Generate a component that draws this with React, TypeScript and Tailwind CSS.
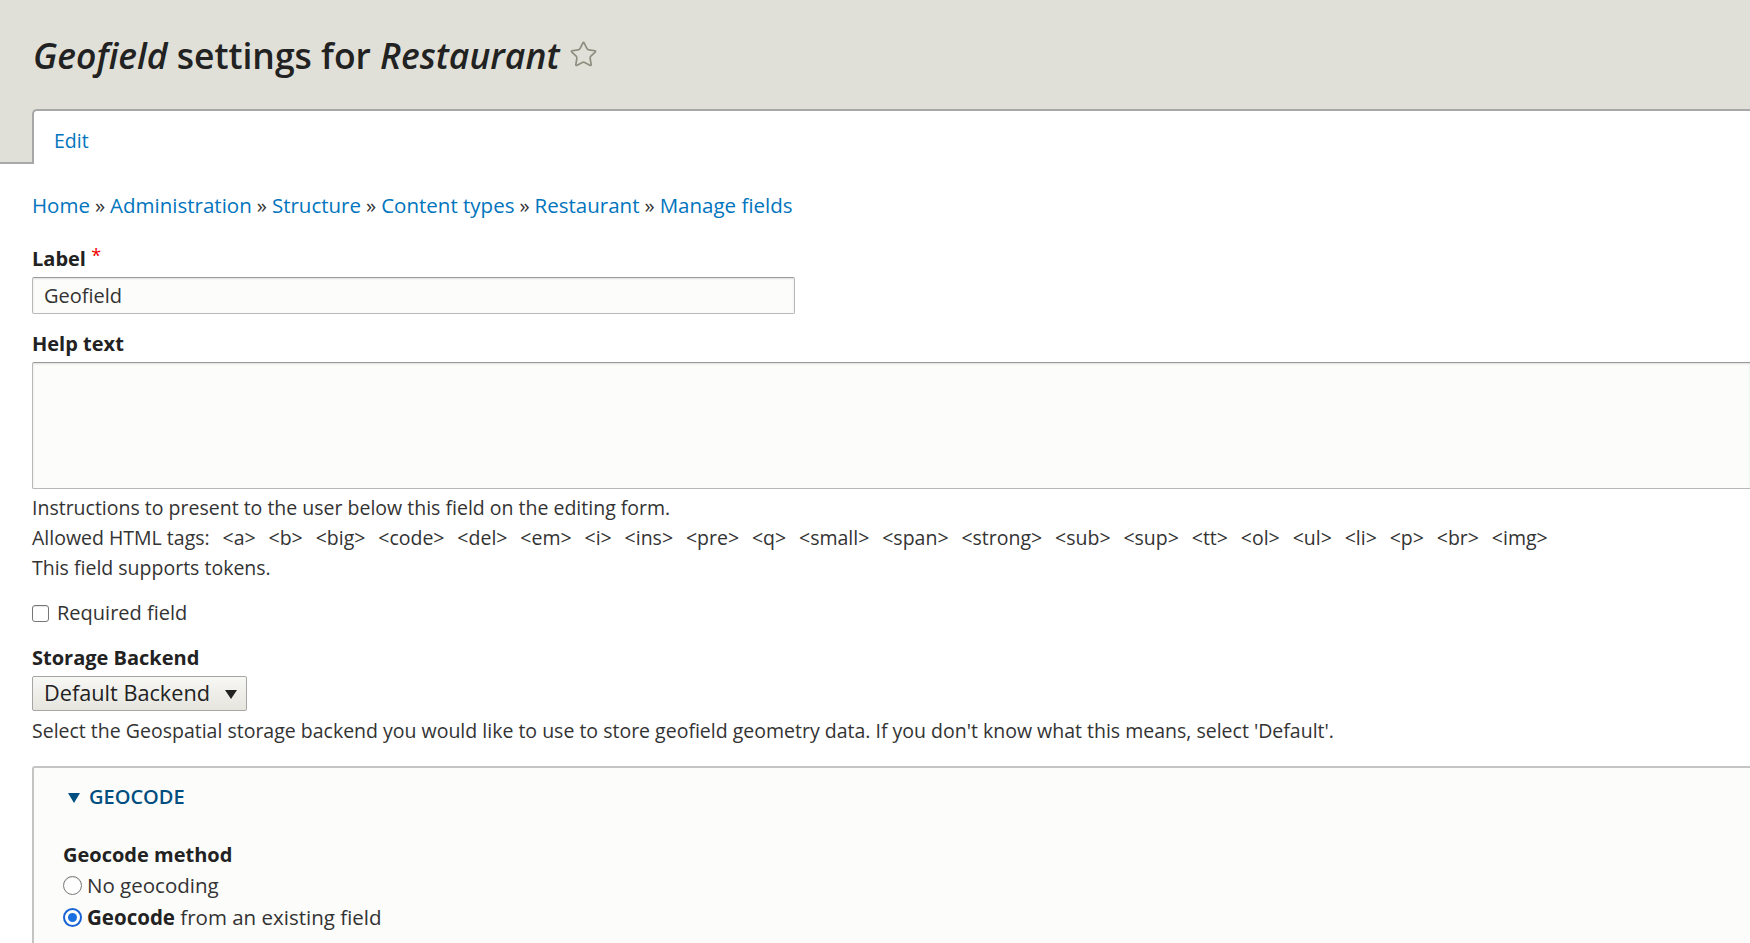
import React from 'react'
import { Star } from 'lucide-react'

const crumbs = ['Home', 'Administration', 'Structure', 'Content types', 'Restaurant', 'Manage fields']

const tags = '<a> <b> <big> <code> <del> <em> <i> <ins> <pre> <q> <small> <span> <strong> <sub> <sup> <tt> <ol> <ul> <li> <p> <br> <img>'

export default function App() {
  return (
    <div className="min-h-screen bg-white text-[#333] overflow-hidden" style={{ fontFamily: '"Open Sans", "Noto Sans", sans-serif' }}>
      {/* Header */}
      <header className="bg-[#e0e0d8]">
        <div className="h-[109px] flex items-center pl-[33px]">
          <h1 className="text-[35.5px] leading-[42px] text-[#222] font-semibold flex items-center">
            <em>Geofield</em>
            <span className="ml-[9px]">settings for</span>
            <em className="ml-[9px]">Restaurant</em>
            <Star className="ml-[9px] w-[29px] h-[29px] text-[#8e8e80]" strokeWidth={1.4} />
          </h1>
        </div>
        <div className="flex h-[55px]">
          <div className="w-[32px] border-b-2 border-[#a8a8a8]"></div>
          <div className="flex-1 bg-white border-t-2 border-l-2 border-[#a8a8a8] rounded-tl-[5px] pl-[20px] pt-[18px]">
            <a href="#" className="text-[19.5px] leading-[24px] text-[#0074bd]">Edit</a>
          </div>
        </div>
      </header>

      <main className="pl-[32px]">
        {/* Breadcrumb */}
        <nav className="mt-[29px] text-[20.5px] leading-[24px] text-[#333]">
          {crumbs.map((c, i) => (
            <span key={c}>
              {i > 0 && <span className="mx-[5px]">»</span>}
              <a href="#" className="text-[#0074bd]">{c}</a>
            </span>
          ))}
        </nav>

        {/* Label */}
        <div className="mt-[30px]">
          <label className="block text-[20px] leading-[24px] font-bold text-[#222]">
            Label <span className="text-[#e00] font-normal align-top text-[18px] leading-[16px]">*</span>
          </label>
          <div className="mt-[6px] w-[763px] h-[37px] bg-[#fcfcfa] border border-[#b8b8b8] border-t-[#999] rounded-[2px] shadow-[inset_0_1px_2px_rgba(0,0,0,0.12)] flex items-center px-[11px] text-[20px] text-[#333]">
            Geofield
          </div>
        </div>

        {/* Help text */}
        <div className="mt-[18px]">
          <label className="block text-[20px] leading-[24px] font-bold text-[#222]">Help text</label>
          <div className="mt-[6px] h-[127px] bg-[#fcfcfa] border border-r-0 border-[#b8b8b8] border-t-[#999] rounded-l-[2px] shadow-[inset_0_1px_2px_rgba(0,0,0,0.12)]"></div>
          <div className="mt-[4px] text-[19.5px] leading-[30px] text-[#333]">
            <p>Instructions to present to the user below this field on the editing form.</p>
            <p className="whitespace-nowrap">
              Allowed HTML tags:<span className="[word-spacing:7.8px]"> {tags}</span>
            </p>
            <p>This field supports tokens.</p>
          </div>
        </div>

        {/* Required */}
        <label className="mt-[18px] flex items-center h-[24px] text-[20px] text-[#333]">
          <span className="w-[17px] h-[17px] rounded-[3px] border border-[#777] bg-white shadow-[inset_0_1px_1px_rgba(0,0,0,0.1)]"></span>
          <span className="ml-[8px]">Required field</span>
        </label>

        {/* Storage backend */}
        <div className="mt-[21px]">
          <label className="block text-[20px] leading-[24px] font-bold text-[#222]">Storage Backend</label>
          <div className="mt-[6px] w-[215px] h-[35px] flex items-center justify-between pl-[11px] pr-[9px] border border-[#a6a6a6] rounded-[2px] bg-[linear-gradient(#f7f7f4,#e6e5de)] text-[21.7px] text-[#222]">
            <span>Default Backend</span>
            <svg width="12" height="10" viewBox="0 0 12 10"><path d="M0 1h12L6 10z" fill="#222" /></svg>
          </div>
          <p className="mt-[5px] text-[19.5px] leading-[30px] text-[#333] whitespace-nowrap">
            Select the Geospatial storage backend you would like to use to store geofield geometry data. If you don't know what this means, select 'Default'.
          </p>
        </div>

        {/* Geocode fieldset */}
        <section className="mt-[20px] bg-[#fcfcfa] border-t-2 border-l-2 border-[#c4c4c4] rounded-tl-[3px] pl-[29px] pt-[17px] pb-[20px]">
          <div className="flex items-center h-[24px] text-[20px] text-[#004f80] font-semibold">
            <svg className="ml-[5px]" width="12" height="11" viewBox="0 0 12 11"><path d="M0 1h12L6 11z" fill="#004f80" /></svg>
            <span className="ml-[9px]">GEOCODE</span>
          </div>
          <div className="mt-[34px]">
            <div className="text-[20px] leading-[24px] font-bold text-[#222]">Geocode method</div>
            <div className="mt-[2px] flex items-center h-[32px] text-[20.5px]">
              <span className="w-[19px] h-[19px] rounded-full border border-[#777] bg-white shadow-[inset_0_1px_1px_rgba(0,0,0,0.1)]"></span>
              <span className="ml-[5px]">No geocoding</span>
            </div>
            <div className="flex items-center h-[32px] text-[20.5px]">
              <span className="w-[19px] h-[19px] rounded-full border-2 border-[#1763d6] bg-white flex items-center justify-center">
                <span className="w-[9px] h-[9px] rounded-full bg-[#1a6fe0]"></span>
              </span>
              <span className="ml-[5px]"><strong className="text-[#222]">Geocode</strong> from an existing field</span>
            </div>
          </div>
        </section>
      </main>
    </div>
  )
}
